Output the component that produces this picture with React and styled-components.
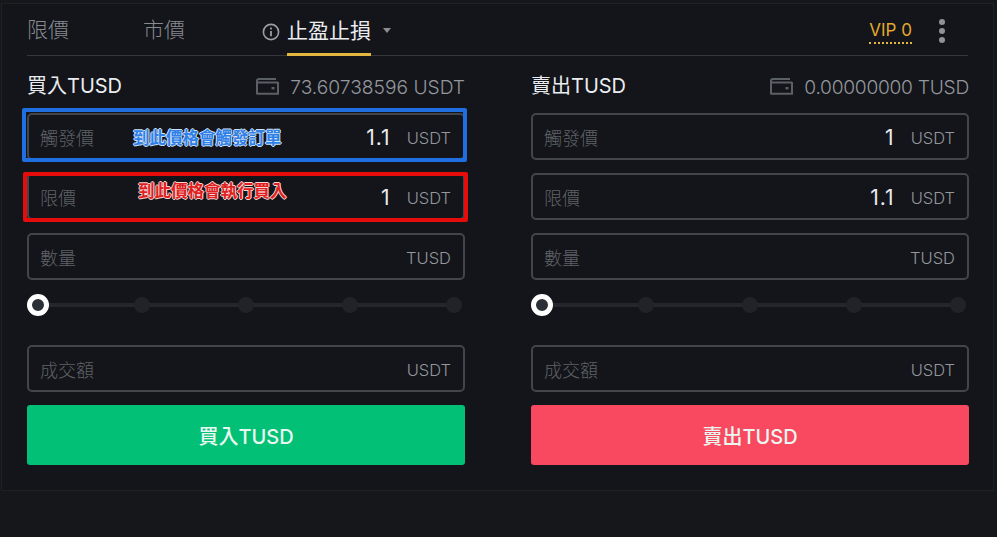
import React from "react";
import styled, { createGlobalStyle } from "styled-components";

const fontStack = `Inter, "Noto Sans CJK TC", sans-serif`;

const GlobalStyle = createGlobalStyle`
  html, body {
    margin: 0;
    padding: 0;
    background: #15171b;
  }
  body {
    font-family: ${fontStack};
  }
`;

const Page = styled.div`
  width: 997px;
  height: 537px;
  overflow: hidden;
  background: #15171b;
  padding-top: 3px;
  box-sizing: border-box;
`;

const Panel = styled.section`
  position: relative;
  width: 993px;
  height: 488px;
  margin-left: 1px;
  box-sizing: border-box;
  padding: 0 25px 0 25px;
  background: #13151a;
  border: 1px solid #1e2126;
`;

const TabBar = styled.nav`
  display: flex;
  align-items: flex-end;
  height: 51px;
  border-bottom: 1px solid #33363b;
  width: 941px;
`;

const Tab = styled.div`
  display: flex;
  flex-direction: column;
  justify-content: flex-end;
  height: 100%;
  font-size: 21px;
  line-height: 28px;
  font-weight: ${(p) => (p.$active ? 400 : 300)};
  color: ${(p) => (p.$active ? "#eaecef" : "#878b91")};
  padding-bottom: ${(p) => (p.$active ? 0 : 11)}px;
  box-sizing: border-box;
  width: ${(p) => p.$width}px;
  flex: none;
`;

const ActiveLabel = styled.span`
  display: block;
  white-space: nowrap;
  padding-bottom: 8px;
  border-bottom: 3px solid #e3b63f;
  margin-bottom: -1px;
`;

const InfoWrap = styled.div`
  display: flex;
  align-items: flex-start;
  height: 100%;
  padding-top: 19px;
  box-sizing: border-box;
  width: 25px;
  color: #9a9fa6;
  flex: none;
`;

const Caret = styled.span`
  width: 0;
  height: 0;
  margin: 24px 0 0 12px;
  align-self: flex-start;
  border-left: 4.5px solid transparent;
  border-right: 4.5px solid transparent;
  border-top: 5px solid #8a8d92;
`;

const TabRight = styled.div`
  margin-left: auto;
  display: flex;
  align-items: flex-start;
  height: 100%;
  padding-top: 15px;
  box-sizing: border-box;
  gap: 27px;
  margin-right: 23px;
`;

const VipBadge = styled.span`
  font-size: 17px;
  font-weight: 400;
  line-height: 22px;
  height: 25px;
  box-sizing: border-box;
  color: #e3a92f;
  border-bottom: 2px dotted #e3b63f;
`;

const Dots = styled.div`
  display: flex;
  flex-direction: column;
  gap: 3px;
`;

const Dot = styled.i`
  display: block;
  width: 6px;
  height: 6px;
  border-radius: 50%;
  background: #8f9298;
`;

const Columns = styled.div`
  display: grid;
  grid-template-columns: 438px 438px;
  column-gap: 66px;
`;

const Column = styled.div`
  display: flex;
  flex-direction: column;
`;

const TitleRow = styled.div`
  display: flex;
  justify-content: space-between;
  align-items: center;
  height: 57px;
`;

const Title = styled.div`
  font-size: 20px;
  font-weight: 400;
  color: #eaecef;
`;

const Balance = styled.div`
  display: flex;
  align-items: center;
  gap: 11px;
  margin-top: 4px;
  font-size: 19.2px;
  font-weight: 300;
  letter-spacing: ${(p) => p.$spacing || 0}px;
  color: #94979c;
`;

const Fields = styled.div`
  display: flex;
  flex-direction: column;
  gap: 13px;
`;

const Field = styled.div`
  display: flex;
  align-items: center;
  height: 47px;
  box-sizing: border-box;
  padding: 0 12px 0 11px;
  border: 2px solid #42454b;
  border-radius: 5px;
  background: #13151a;
`;

const FieldLabel = styled.span`
  font-size: 18px;
  font-weight: 300;
  color: #5f6267;
`;

const FieldValue = styled.span`
  margin-left: auto;
  padding-top: 2px;
  font-size: 21px;
  font-weight: 400;
  letter-spacing: 1px;
  color: #eaecef;
`;

const FieldUnit = styled.span`
  margin-left: ${(p) => (p.$alone ? "auto" : "16px")};
  padding-top: 2px;
  font-size: 16.5px;
  font-weight: 300;
  color: #94979c;
`;

const Slider = styled.div`
  position: relative;
  display: flex;
  justify-content: space-between;
  align-items: center;
  height: 50px;
  margin-bottom: 15px;
`;

const SliderLine = styled.div`
  position: absolute;
  left: 11px;
  right: 11px;
  top: 23px;
  height: 4px;
  background: #23262b;
`;

const Stop = styled.div`
  position: relative;
  display: flex;
  justify-content: center;
  width: 22px;
`;

const Knob = styled.div`
  width: 22px;
  height: 22px;
  box-sizing: border-box;
  border: 5px solid #fff;
  border-radius: 50%;
  background: #2b2f36;
`;

const Tick = styled.div`
  width: 16px;
  height: 16px;
  border-radius: 50%;
  background: #202327;
`;

const ActionButton = styled.button`
  display: block;
  width: 100%;
  height: 60px;
  margin-top: 13px;
  border: 0;
  border-radius: 3px;
  font-family: inherit;
  font-size: 20px;
  font-weight: 500;
  color: #eaf7f1;
  background: ${(p) => p.$color};
`;

const Annotation = styled.div`
  position: absolute;
  box-sizing: border-box;
  left: ${(p) => p.$x}px;
  top: ${(p) => p.$y}px;
  width: ${(p) => p.$w}px;
  height: ${(p) => p.$h}px;
  border: 4px solid ${(p) => p.$color};
  border-radius: 2px;
  pointer-events: none;
`;

const Callout = styled.span`
  position: absolute;
  left: ${(p) => p.$x}px;
  top: ${(p) => p.$y}px;
  font-size: 16.5px;
  line-height: 20px;
  font-weight: 700;
  white-space: nowrap;
  color: ${(p) => p.$color};
  text-shadow: 1px 0 0 ${(p) => p.$halo}, -1px 0 0 ${(p) => p.$halo}, 0 1px 0 ${(p) => p.$halo}, 0 -1px 0 ${(p) => p.$halo};
`;

const InfoIcon = () => (
  <svg width="18" height="18" viewBox="0 0 18 18" fill="none" stroke="currentColor">
    <circle cx="9" cy="9" r="7.6" strokeWidth="1.6" />
    <path d="M9 8v5.2M9 4.6v1.8" strokeWidth="1.8" />
  </svg>
);

const WalletIcon = () => (
  <svg width="23" height="17" viewBox="0 0 23 17" fill="none" stroke="#5b5f66" strokeWidth="2">
    <path d="M22 4.5H1.5M1 16V3A2 2 0 0 1 3 1H20M0.5 15.8H22V4" />
    <rect x="15.5" y="9" width="3" height="2.4" fill="#5b5f66" stroke="none" />
  </svg>
);

function OrderColumn({ title, balance, spacing, first, second, color, action }) {
  return (
    <Column>
      <TitleRow>
        <Title>{title}</Title>
        <Balance $spacing={spacing}>
          <WalletIcon />
          {balance}
        </Balance>
      </TitleRow>
      <Fields>
        <Field>
          <FieldLabel>觸發價</FieldLabel>
          <FieldValue>{first}</FieldValue>
          <FieldUnit>USDT</FieldUnit>
        </Field>
        <Field>
          <FieldLabel>限價</FieldLabel>
          <FieldValue>{second}</FieldValue>
          <FieldUnit>USDT</FieldUnit>
        </Field>
        <Field>
          <FieldLabel>數量</FieldLabel>
          <FieldUnit $alone>TUSD</FieldUnit>
        </Field>
      </Fields>
      <Slider>
        <SliderLine />
        <Stop><Knob /></Stop>
        <Stop><Tick /></Stop>
        <Stop><Tick /></Stop>
        <Stop><Tick /></Stop>
        <Stop><Tick /></Stop>
      </Slider>
      <Field>
        <FieldLabel>成交額</FieldLabel>
        <FieldUnit $alone>USDT</FieldUnit>
      </Field>
      <ActionButton $color={color}>{action}</ActionButton>
    </Column>
  );
}

export default function App() {
  return (
    <Page>
      <GlobalStyle />
      <Panel>
        <TabBar>
          <Tab $width={116}>限價</Tab>
          <Tab $width={119}>市價</Tab>
          <InfoWrap>
            <InfoIcon />
          </InfoWrap>
          <Tab $active $width={84}>
            <ActiveLabel>止盈止損</ActiveLabel>
          </Tab>
          <Caret />
          <TabRight>
            <VipBadge>VIP 0</VipBadge>
            <Dots>
              <Dot />
              <Dot />
              <Dot />
            </Dots>
          </TabRight>
        </TabBar>
        <Columns>
          <OrderColumn
            title="買入TUSD"
            balance="73.60738596 USDT"
            first="1.1"
            second="1"
            color="#02c076"
            action="買入TUSD"
          />
          <OrderColumn
            title="賣出TUSD"
            balance="0.00000000 TUSD"
            spacing={-0.27}
            first="1"
            second="1.1"
            color="#f84960"
            action="賣出TUSD"
          />
        </Columns>
        <Annotation $x={20} $y={104} $w={445} $h={54} $color="#1f6fe0" />
        <Annotation $x={21} $y={168} $w={445} $h={50} $color="#e60c0c" />
        <Callout $x={131} $y={124} $color="#2f7fe6" $halo="#cfe2fb">到此價格會觸發訂單</Callout>
        <Callout $x={136} $y={177} $color="#e01f1f" $halo="#f7d5d5">到此價格會執行買入</Callout>
      </Panel>
    </Page>
  );
}
